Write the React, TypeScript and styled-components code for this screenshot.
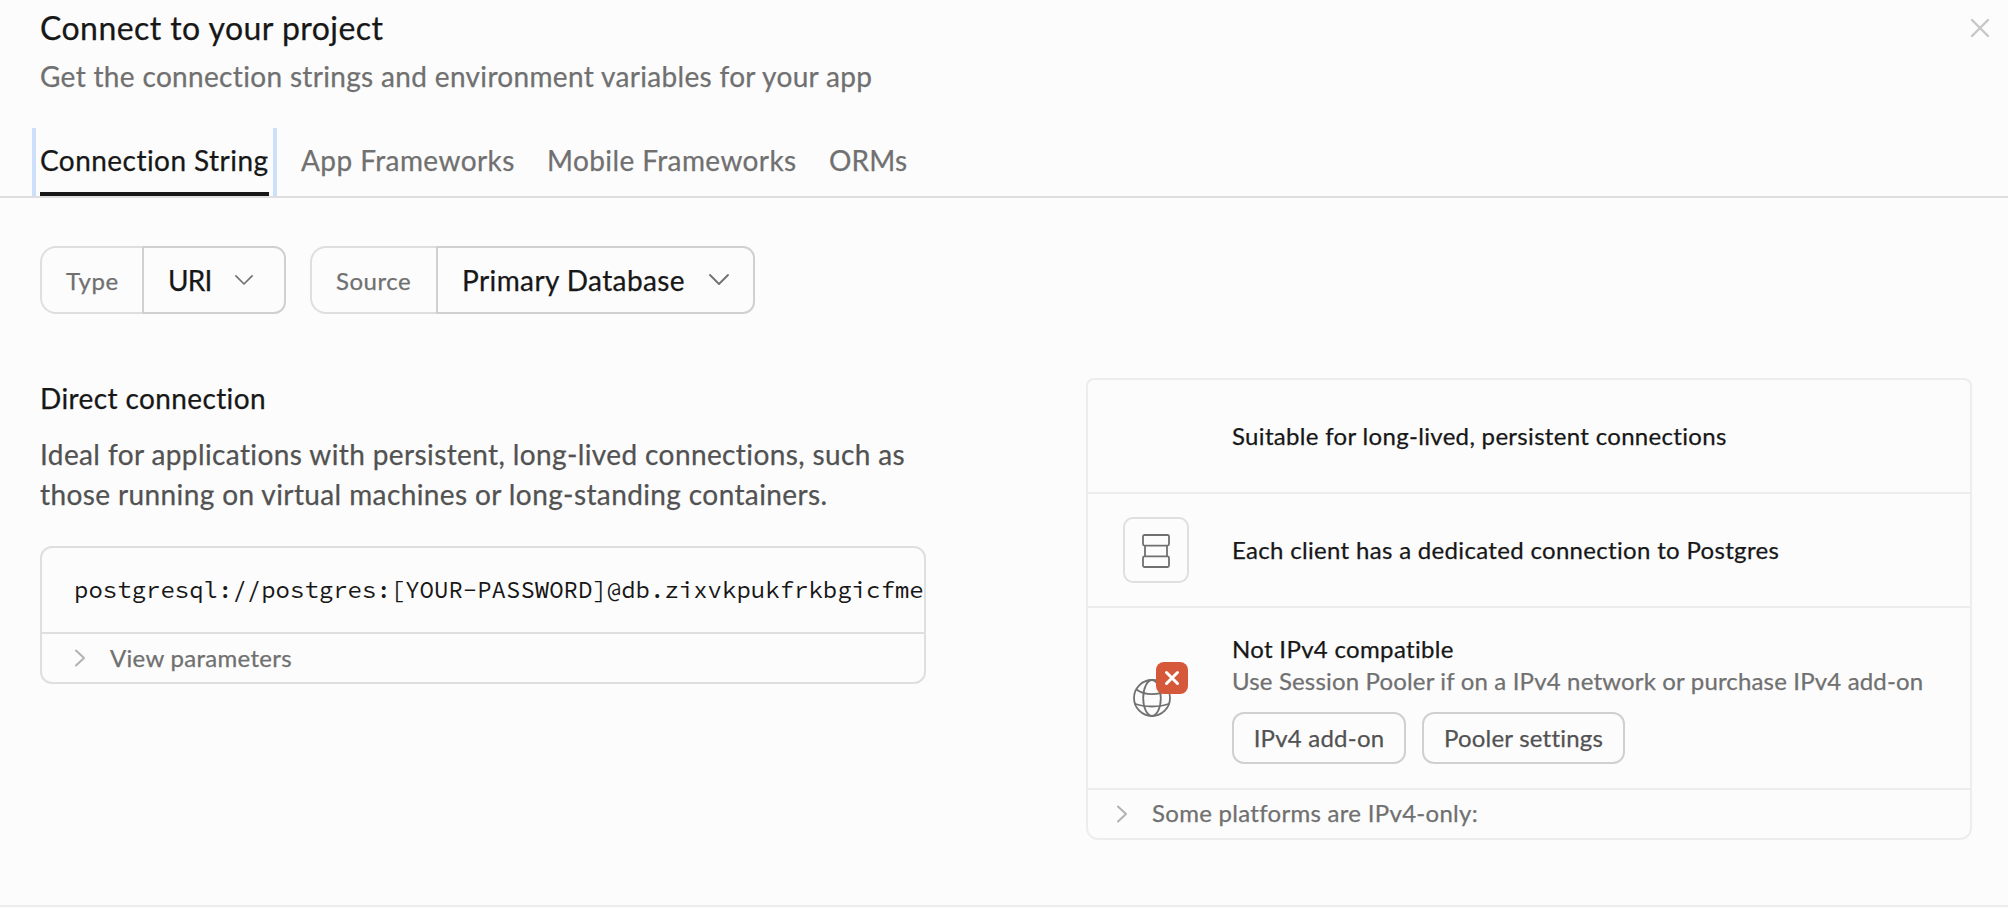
import React from 'react';
import styled, { createGlobalStyle } from 'styled-components';

const color = {
  bg: '#fcfcfc',
  text: '#171717',
  textLight: '#525252',
  textLighter: '#707070',
  muted: '#b2b2b2',
  border: '#dfdfdf',
  borderStrong: '#d0d0d0',
  borderMuted: '#ededed',
  focus: '#cce0fb',
  danger: '#d6583a',
};

const GlobalStyle = createGlobalStyle`
  *, *::before, *::after { box-sizing: border-box; }
  body {
    margin: 0;
    background: ${color.bg};
    color: ${color.text};
    font-family: Lato, "Liberation Sans", sans-serif;
    font-size: 28px;
    letter-spacing: 0.33px;
    -webkit-text-stroke: 0.25px currentColor;
  }
  button { font: inherit; letter-spacing: inherit; color: inherit; background: none; border: 0; padding: 0; margin: 0; }
  h2, h3, p { margin: 0; font-weight: 400; }
  svg { display: block; flex: none; fill: none; stroke: currentColor; }
`;

const Dialog = styled.main`
  width: 100%;
  height: 908px;
  overflow: hidden;
  display: flex;
  flex-direction: column;
`;

const Header = styled.header`
  height: 128px;
  padding: 7px 17px 0 40px;
  display: flex;
  justify-content: space-between;
`;

const Title = styled.h2`
  font-size: 32px;
  line-height: 42px;
  letter-spacing: 0.44px;
`;

const Subtitle = styled.p`
  margin-top: 7px;
  line-height: 40px;
  letter-spacing: 0.33px;
  color: ${color.textLighter};
`;

const CloseButton = styled.button`
  display: block;
  height: 22px;
  margin-top: 10px;
  color: #c7c7c7;
`;

const Tabs = styled.nav`
  flex: none;
  height: 70px;
  padding-left: 32px;
  border-bottom: 2px solid ${color.border};
  display: flex;
`;

const Tab = styled.button<{ $spacing: number; $width: number }>`
  flex: none;
  width: ${(p) => p.$width}px;
  margin-right: 32px;
  padding-bottom: 4px;
  text-align: left;
  white-space: nowrap;
  letter-spacing: ${(p) => p.$spacing}px;
  color: ${color.textLighter};
`;

const FocusFrame = styled.div`
  flex: none;
  margin-right: 24px;
  padding: 0 4px;
  border: solid ${color.focus};
  border-width: 0 4px;
  display: flex;
`;

const ActiveTab = styled(Tab)`
  margin: 0;
  padding-bottom: 0;
  color: ${color.text};
  border-bottom: 4px solid ${color.text};
`;

const Filters = styled.div`
  flex: none;
  padding: 48px 40px 0;
  display: flex;
  gap: 24px;
`;

const Field = styled.div`
  height: 68px;
  display: flex;
`;

const FieldLabel = styled.span<{ $width: number }>`
  width: ${(p) => p.$width}px;
  padding-left: 24px;
  border: 2px solid ${color.border};
  border-right: 0;
  border-radius: 16px 0 0 16px;
  display: flex;
  align-items: center;
  font-size: 24px;
  letter-spacing: 0.5px;
  color: ${color.textLighter};
`;

const Select = styled.button<{ $width: number; $spacing: number; $end: number }>`
  width: ${(p) => p.$width}px;
  padding: 0 ${(p) => p.$end}px 0 24px;
  border: 2px solid ${color.borderStrong};
  border-radius: 0 12px 12px 0;
  display: flex;
  align-items: center;
  justify-content: space-between;
  white-space: nowrap;
  letter-spacing: ${(p) => p.$spacing}px;
  svg { color: ${color.textLighter}; }
`;

const Content = styled.div`
  flex: none;
  height: 593px;
  padding: 64px 36px 0 40px;
  border-bottom: 2px solid ${color.borderMuted};
  display: flex;
  justify-content: space-between;
  align-items: flex-start;
`;

const Column = styled.section`
  width: 886px;
`;

const Heading = styled.h3`
  font-size: 28px;
  line-height: 40px;
  letter-spacing: 0.39px;
`;

const Description = styled.p`
  margin-top: 16px;
  line-height: 40px;
  white-space: nowrap;
  letter-spacing: 0.39px;
  color: ${color.textLight};
`;

const CodeCard = styled.div`
  margin-top: 32px;
  height: 138px;
  border: 2px solid ${color.border};
  border-radius: 12px;
  overflow: hidden;
`;

const Code = styled.pre`
  margin: 0;
  height: 86px;
  padding-left: 32px;
  border-bottom: 2px solid ${color.border};
  overflow: hidden;
  font: 24px/84px "Source Code Pro", "Liberation Mono", monospace;
  letter-spacing: 0;
  -webkit-text-stroke: 0;
`;

const Disclosure = styled.button`
  width: 100%;
  height: 48px;
  padding: 0 0 0 32px;
  display: flex;
  align-items: center;
  gap: 20px;
  font-size: 24px;
  letter-spacing: 0.29px;
  color: ${color.textLighter};
  svg { color: ${color.muted}; }
`;

const DisclosureLabel = styled.span`
  padding-bottom: 2px;
`;

const InfoCard = styled(Column)`
  height: 462px;
  border: 2px solid ${color.borderMuted};
  border-radius: 8px 8px 12px 12px;
  font-size: 24px;
  line-height: 32px;
  letter-spacing: 0.32px;
  ${Disclosure} { padding-left: 28px; }
`;

const InfoRow = styled.div<{ $height: number }>`
  height: ${(p) => p.$height}px;
  border-bottom: 2px solid ${color.borderMuted};
  display: flex;
  align-items: center;
`;

const IconSlot = styled.div`
  flex: none;
  width: 144px;
  padding-left: 35px;
`;

const IconFrame = styled.div`
  width: 66px;
  height: 66px;
  padding-top: 2px;
  border: 2px solid ${color.border};
  border-radius: 10px;
  display: flex;
  align-items: center;
  justify-content: center;
  color: ${color.textLighter};
`;

const GlobeFrame = styled.div`
  position: relative;
  width: 66px;
  padding-left: 10px;
  color: ${color.textLighter};
`;

const Badge = styled.span`
  position: absolute;
  left: 33px;
  top: -17px;
  width: 32px;
  height: 32px;
  border-radius: 8px;
  background: ${color.danger};
  color: #fff;
  display: flex;
  align-items: center;
  justify-content: center;
`;

const Note = styled.p`
  letter-spacing: 0.16px;
  white-space: nowrap;
  color: ${color.textLighter};
`;

const Actions = styled.div`
  margin-top: 15px;
  display: flex;
  gap: 16px;
`;

const ActionButton = styled.button<{ $width: number }>`
  width: ${(p) => p.$width}px;
  height: 52px;
  border: 2px solid ${color.borderStrong};
  border-radius: 12px;
  letter-spacing: 0.22px;
  color: ${color.textLight};
`;

const ChevronDown = ({ size }: { size: number }) => (
  <svg width={size} height={size * 0.6} viewBox="0 0 20 12" strokeWidth="1.8" strokeLinecap="round" strokeLinejoin="round">
    <path d="M1 1l9 9 9-9" />
  </svg>
);

const ChevronRight = () => (
  <svg width="16" height="18" viewBox="0 0 16 18" strokeWidth="2" strokeLinecap="round" strokeLinejoin="round">
    <path d="M2 1.500l8 7.500-8 7.500" />
  </svg>
);

export default function App() {
  return (
    <>
      <GlobalStyle />
      <Dialog>
        <Header>
          <div>
            <Title>Connect to your project</Title>
            <Subtitle>Get the connection strings and environment variables for your app</Subtitle>
          </div>
          <CloseButton aria-label="Close">
            <svg width="22" height="22" viewBox="0 0 22 22" strokeWidth="2.4" strokeLinecap="round">
              <path d="M3 3l16 16M19 3L3 19" />
            </svg>
          </CloseButton>
        </Header>

        <Tabs>
          <FocusFrame>
            <ActiveTab $spacing={0.45} $width={229}>Connection String</ActiveTab>
          </FocusFrame>
          <Tab $spacing={0.42} $width={214}>App Frameworks</Tab>
          <Tab $spacing={0.4} $width={250}>Mobile Frameworks</Tab>
          <Tab $spacing={0.16} $width={80}>ORMs</Tab>
        </Tabs>

        <Filters>
          <Field>
            <FieldLabel $width={102}>Type</FieldLabel>
            <Select $width={144} $spacing={-0.8} $end={31}>URI<ChevronDown size={18} /></Select>
          </Field>
          <Field>
            <FieldLabel $width={126}>Source</FieldLabel>
            <Select $width={319} $spacing={0.4} $end={24}>Primary Database<ChevronDown size={20} /></Select>
          </Field>
        </Filters>

        <Content>
          <Column>
            <Heading>Direct connection</Heading>
            <Description>
              Ideal for applications with persistent, long-lived connections, such as
              <br />
              those running on virtual machines or long-standing containers.
            </Description>
            <CodeCard>
              <Code>postgresql://postgres:[YOUR-PASSWORD]@db.zixvkpukfrkbgicfme</Code>
              <Disclosure><ChevronRight /><DisclosureLabel>View parameters</DisclosureLabel></Disclosure>
            </CodeCard>
          </Column>

          <InfoCard>
            <InfoRow $height={114}>
              <IconSlot />
              <p>Suitable for long-lived, persistent connections</p>
            </InfoRow>
            <InfoRow $height={114}>
              <IconSlot>
                <IconFrame>
                  <svg width="28" height="34" viewBox="0 0 28 34" strokeWidth="1.8">
                    <rect x="1" y="1" width="26" height="10.6" rx="1.5" />
                    <path d="M3 11.600v10.800M25 11.600v10.800" />
                    <rect x="1" y="22.4" width="26" height="10.6" rx="1.5" />
                  </svg>
                </IconFrame>
              </IconSlot>
              <p>Each client has a dedicated connection to Postgres</p>
            </InfoRow>
            <InfoRow $height={182}>
              <IconSlot>
                <GlobeFrame>
                  <svg width="38" height="38" viewBox="0 0 38 38" strokeWidth="1.8">
                    <circle cx="19" cy="19" r="18" />
                    <ellipse cx="19" cy="19" rx="8.8" ry="18" />
                    <path d="M3.500 10.500c8 6.200 23 6.200 31 0M1.200 24.500c10 4 25.600 4 35.600 0" />
                  </svg>
                  <Badge>
                    <svg width="16" height="16" viewBox="0 0 16 16" strokeWidth="3" strokeLinecap="round">
                      <path d="M2.500 2.500l11 11M13.500 2.500l-11 11" />
                    </svg>
                  </Badge>
                </GlobeFrame>
              </IconSlot>
              <div>
                <p>Not IPv4 compatible</p>
                <Note>Use Session Pooler if on a IPv4 network or purchase IPv4 add-on</Note>
                <Actions>
                  <ActionButton $width={174}>IPv4 add-on</ActionButton>
                  <ActionButton $width={203}>Pooler settings</ActionButton>
                </Actions>
              </div>
            </InfoRow>
            <Disclosure><ChevronRight /><DisclosureLabel>Some platforms are IPv4-only:</DisclosureLabel></Disclosure>
          </InfoCard>
        </Content>
      </Dialog>
    </>
  );
}
